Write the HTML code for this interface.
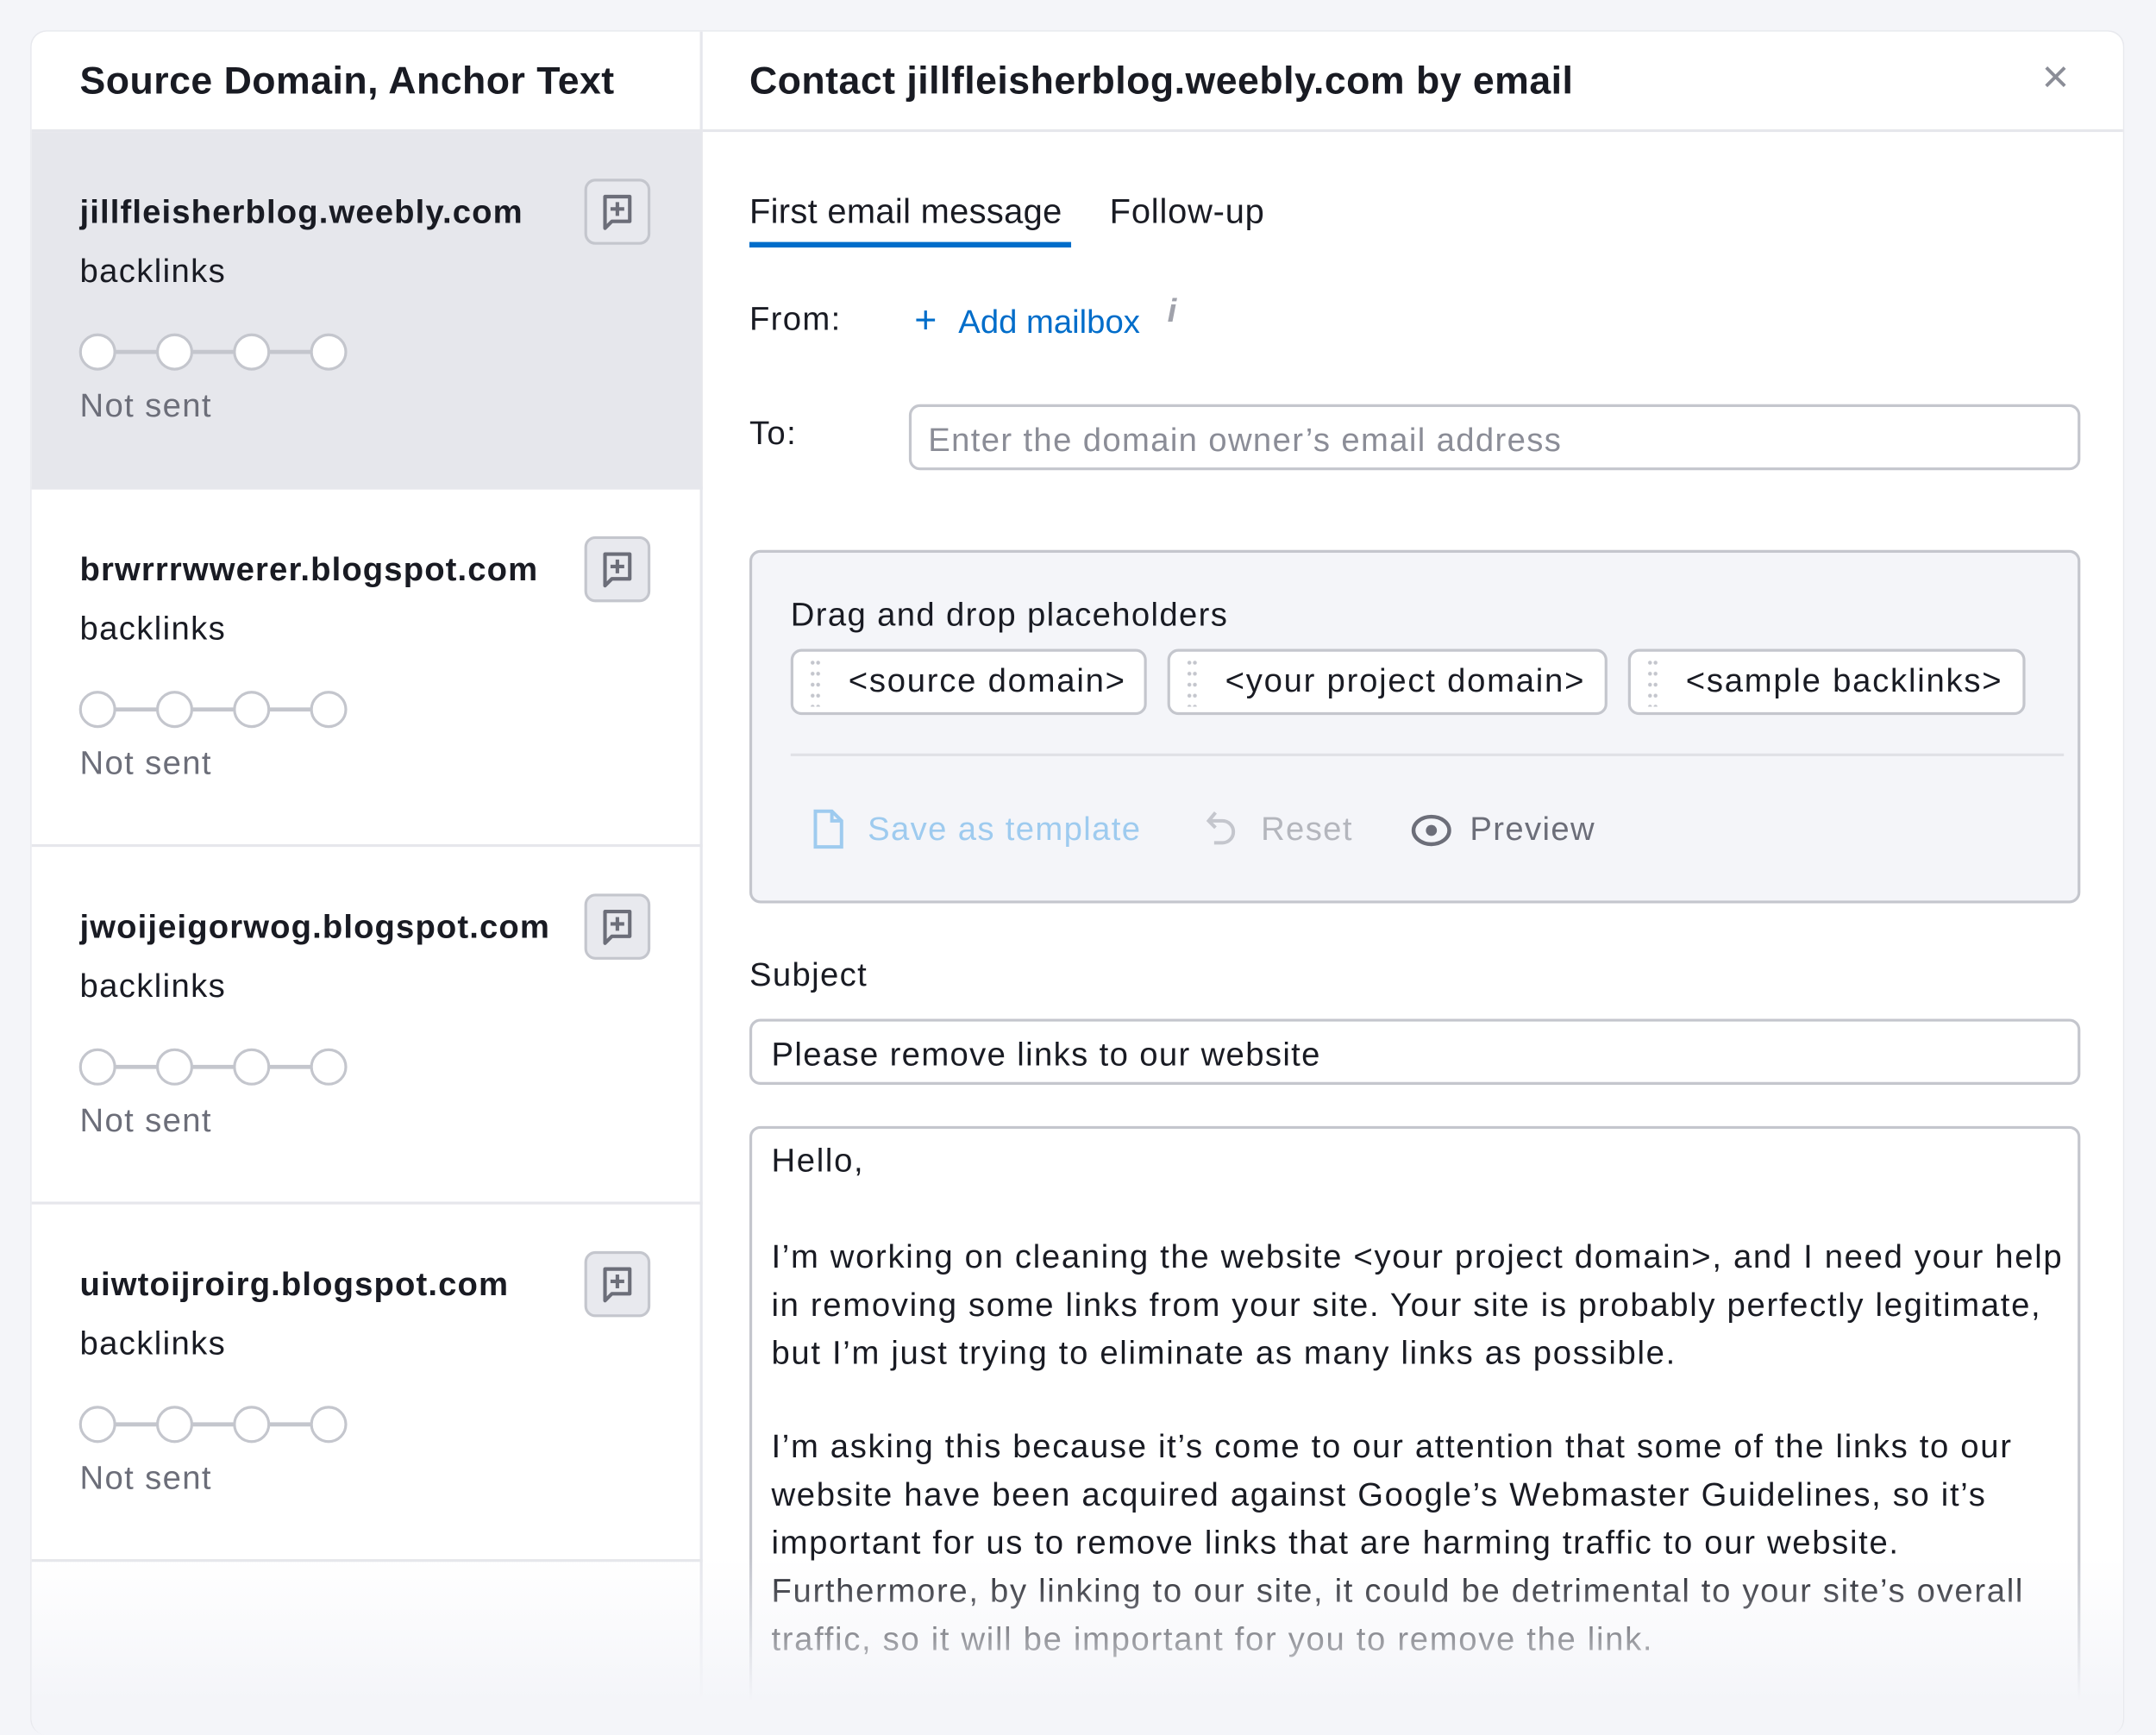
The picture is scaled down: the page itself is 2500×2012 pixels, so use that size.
<!DOCTYPE html>
<html><head><meta charset="utf-8"><style>
*{box-sizing:border-box;margin:0;padding:0}
html,body{width:2500px;height:1980px;overflow:hidden;background:#f4f5f9}
#w{position:absolute;left:0;top:0;width:1568px;height:1242px;transform:scale(1.5944);transform-origin:0 0;font-family:"Liberation Sans",sans-serif;color:#191b23;letter-spacing:0.85px}
.card{position:absolute;left:22px;top:22px;width:1523px;height:1240px;background:#fff;border-radius:12px;border:1px solid #e8e9ee;border-bottom:none;overflow:hidden}
.abs{position:absolute}
.t{position:absolute;white-space:nowrap}
.left{position:absolute;left:0;top:0;width:488px;height:1240px;border-right:2px solid #e6e7ec}
.row{position:absolute;left:0;width:488px;height:260px;border-bottom:2px solid #e6e7ec}
.in{position:absolute;border:2px solid #c4c6cd;border-radius:8px;background:#fff}
.chip{position:absolute;top:70px;height:48px;border:2px solid #c4c6cd;border-radius:8px;background:#fff;font-size:24px;line-height:44px;padding-left:40px;letter-spacing:1.1px}
.chip:before{content:"";position:absolute;left:12px;top:4px;width:8px;height:36px;background:radial-gradient(circle,#c4c6cd 1.2px,transparent 1.6px) 0 0/4px 8px}
.p{font-size:24px;line-height:35px;letter-spacing:1.05px}
.fade{position:absolute;left:0;top:1110px;width:1523px;height:130px;background:linear-gradient(rgba(244,245,249,0),rgba(244,245,249,1) 80%)}
</style></head><body><div id="w">
<div class="card">
<div class="left">
<div class="t" style="left:35px;top:20px;font-size:28px;font-weight:bold;letter-spacing:0.3px">Source Domain, Anchor Text</div>
<div class="abs" style="left:0;top:71px;width:488px;height:2px;background:#e6e7ec"></div>
<div class="row" style="top:73px;background:#e6e7ec"></div>
<div class="row" style="top:333px"></div>
<div class="row" style="top:593px"></div>
<div class="row" style="top:853px"></div>
</div>
<div class="abs" style="left:488px;top:71px;width:1035px;height:2px;background:#e6e7ec"></div>
<div class="t" style="left:522px;top:20px;font-size:28px;font-weight:bold;letter-spacing:0.3px">Contact jillfleisherblog.weebly.com by email</div>
<div class="t" style="left:1462px;top:14px;font-size:34px;color:#8b8d97">×</div>

<div class="t" style="left:522px;top:117px;font-size:25px;letter-spacing:0.2px">First email message</div>
<div class="abs" style="left:522px;top:153px;width:234px;height:4px;background:#006dca"></div>
<div class="t" style="left:784px;top:117px;font-size:25px;letter-spacing:0.5px">Follow-up</div>
<div class="t" style="left:522px;top:196px;font-size:24px">From:</div>
<div class="t" style="left:642px;top:194px;font-size:28px;color:#006dca">+</div>
<div class="t" style="left:674px;top:198px;font-size:24px;color:#006dca;letter-spacing:0">Add mailbox</div>
<div class="t" style="left:826px;top:190px;font-size:24px;color:#a0a2ab;font-style:italic;font-weight:bold">i</div>
<div class="t" style="left:522px;top:279px;font-size:24px">To:</div>
<div class="in" style="left:638px;top:271px;width:852px;height:48px"></div>
<div class="t" style="left:652px;top:284px;font-size:24px;color:#8b8d97">Enter the domain owner’s email address</div>

<div class="abs" style="left:522px;top:377px;width:968px;height:257px;border:2px solid #c4c6cd;border-radius:8px;background:#f4f5f9">
<div class="t" style="left:28px;top:32px;font-size:24px">Drag and drop placeholders</div>
<div class="chip" style="left:28px;width:259px">&lt;source domain&gt;</div>
<div class="chip" style="left:302px;width:320px">&lt;your project domain&gt;</div>
<div class="chip" style="left:637px;width:289px">&lt;sample backlinks&gt;</div>
<div class="abs" style="left:28px;top:146px;width:926px;height:2px;background:#e0e1e6"></div>
<svg class="abs" style="left:43px;top:186px" width="26" height="30" viewBox="0 0 26 30"><path d="M3 2h12l7 7v19H3z M15 2v7h7" fill="none" stroke="#9ecbef" stroke-width="2.5"/></svg>
<div class="t" style="left:84px;top:188px;font-size:24px;color:#9ecbef">Save as template</div>
<svg class="abs" style="left:328px;top:186px" width="28" height="32" viewBox="0 0 28 32"><path d="M9 3L4 9l5 5 M4 9h10a8 8 0 0 1 0 16H8" fill="none" stroke="#c4c6cd" stroke-width="2.5"/></svg>
<div class="t" style="left:370px;top:188px;font-size:24px;color:#b4b6bd">Reset</div>
<svg class="abs" style="left:478px;top:189px" width="32" height="26" viewBox="0 0 32 26"><ellipse cx="16" cy="13" rx="13" ry="10" fill="none" stroke="#6c6e79" stroke-width="2.8"/><circle cx="16" cy="13" r="4" fill="#6c6e79"/></svg>
<div class="t" style="left:522px;top:188px;font-size:24px;color:#6c6e79">Preview</div>
</div>

<div class="t" style="left:522px;top:673px;font-size:24px">Subject</div>
<div class="in" style="left:522px;top:718px;width:968px;height:48px"></div>
<div class="t" style="left:538px;top:731px;font-size:24px">Please remove links to our website</div>
<div class="in" style="left:522px;top:796px;width:968px;height:460px"></div>
<div class="t p" style="left:538px;top:804px">Hello,</div>
<div class="abs p" style="left:538px;top:874px;width:945px">I’m working on cleaning the website &lt;your project domain&gt;, and I need your help in removing some links from your site. Your site is probably perfectly legitimate, but I’m just trying to eliminate as many links as possible.</div>
<div class="abs p" style="left:538px;top:1012px;width:945px">I’m asking this because it’s come to our attention that some of the links to our website have been acquired against Google’s Webmaster Guidelines, so it’s important for us to remove links that are harming traffic to our website. Furthermore, by linking to our site, it could be detrimental to your site’s overall traffic, so it will be important for you to remove the link.</div>
<div class="fade"></div>
</div>

<div id="rows"></div>
</div>
<script>
var doms=["jillfleisherblog.weebly.com","brwrrrwwerer.blogspot.com","jwoijeigorwog.blogspot.com","uiwtoijroirg.blogspot.com"];
var h="";
for(var i=0;i<4;i++){var y=22+i*260;
h+='<div class="t" style="left:58px;top:'+(y+119)+'px;font-size:24px;font-weight:bold;color:#191b23;letter-spacing:0.7px">'+doms[i]+'</div>';
h+='<div class="t" style="left:58px;top:'+(y+162)+'px;font-size:24px">backlinks</div>';
h+='<div class="t" style="left:58px;top:'+(y+260)+'px;font-size:24px;color:#6c6e79">Not sent</div>';
h+='<div class="abs" style="left:425px;top:'+(y+108)+'px;width:48px;height:48px;border:2px solid #c4c6cd;border-radius:8px;background:#e8e9ee"><svg width="44" height="44" viewBox="0 0 44 44"><path d="M13 11h18v18H18l-5 5z" fill="none" stroke="#6c6e79" stroke-width="2.6" stroke-linejoin="round"/><path d="M22 15v10M17 20h10" stroke="#6c6e79" stroke-width="2.6"/></svg></div>';
h+='<svg class="abs" style="left:56px;top:'+(y+219)+'px" width="200" height="30" viewBox="0 0 200 30"><path d="M15 15h170" stroke="#c4c6cd" stroke-width="3"/>';
for(var j=0;j<4;j++)h+='<circle cx="'+(15+j*56)+'" cy="15" r="12.5" fill="#fff" stroke="#c4c6cd" stroke-width="2"/>';
h+='</svg>';}
document.getElementById("rows").innerHTML=h;
</script>
</body></html>
